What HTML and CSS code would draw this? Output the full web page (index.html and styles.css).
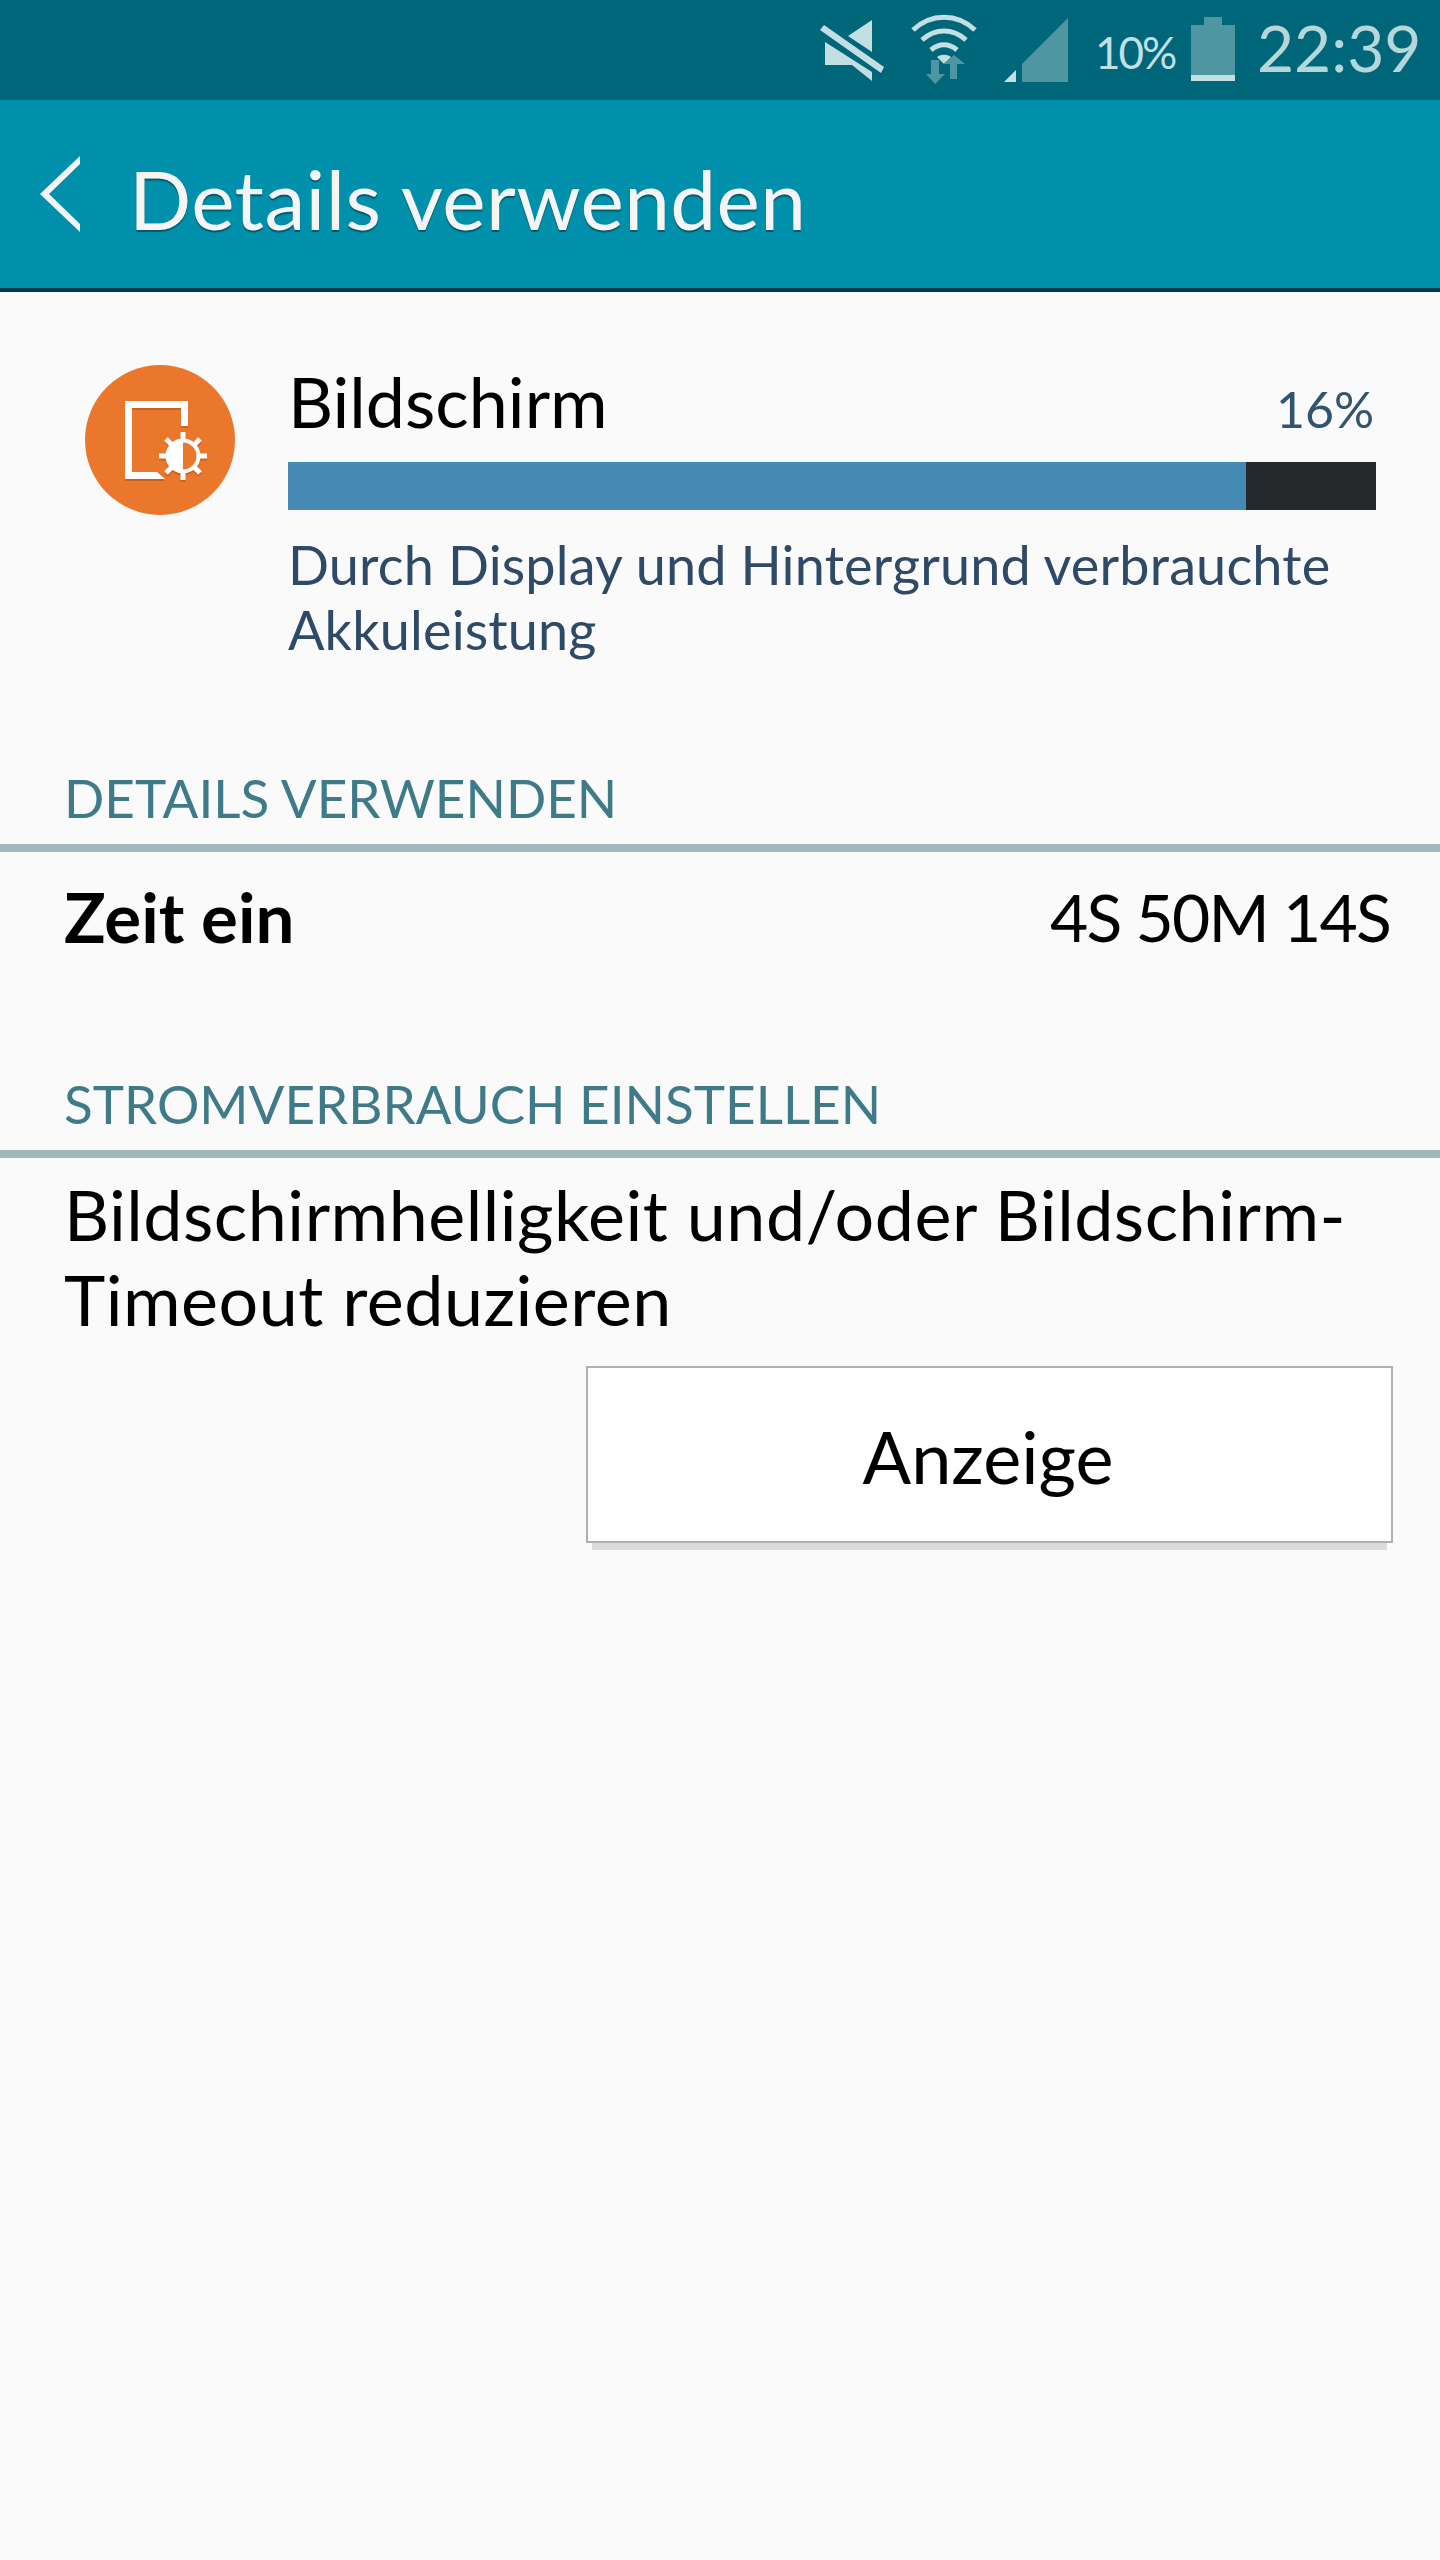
FILE: index.html
```html
<!DOCTYPE html>
<html>
<head>
  <meta charset="UTF-8">
  <title>Details verwenden</title>
  <link rel="stylesheet" href="styles.css">
</head>
<body>

  <div class="status-bar">
    <svg class="ic-mute" width="64" height="62" viewBox="0 0 64 62">
      <path d="M52 0V32L28 16Z M5 22L52 52V61L32 45H5Z" fill="#c3dfe3"/>
      <path d="M0 10L4 5L64 47L61 53Z" fill="#c3dfe3"/>
    </svg>
    <svg class="ic-wifi" width="66" height="70" viewBox="0 0 66 70">
      <g fill="none" stroke="#c3dfe3" stroke-width="5">
        <path d="M2 16C20 -1 46 -1 64 16"/>
        <path d="M11 26C24 14 42 14 55 26"/>
        <path d="M20 36C28 29 38 29 46 36"/>
      </g>
      <path d="M26 43C30 40 36 40 40 43L33 50Z" fill="#c3dfe3"/>
      <path d="M20 46H28V60H34L24 70L15 60H20Z" fill="#4f96a3"/>
      <path d="M39 65H46V50H54L43 41L32 50H39Z" fill="#4f96a3"/>
    </svg>
    <svg class="ic-signal" width="64" height="64" viewBox="0 0 64 64">
      <path d="M18 64V46L64 0V64Z" fill="#4f96a3"/>
      <path d="M0 64L12 52V64Z" fill="#c3dfe3"/>
    </svg>
    <span class="status-pct">10%</span>
    <div class="battery">
      <div class="battery-cap"></div>
      <div class="battery-body"><div class="battery-level"></div></div>
    </div>
    <span class="status-time">22:39</span>
  </div>

  <div class="action-bar">
    <svg class="ic-back" width="40" height="76" viewBox="0 0 40 76">
      <path d="M40 0V8L9 38L40 68V76L0 38Z" fill="#f5f5f5"/>
    </svg>
    <span class="action-title">Details verwenden</span>
  </div>

  <div class="usage">
    <svg class="ic-screen" width="150" height="150" viewBox="0 0 150 150">
      <circle cx="75" cy="75" r="75" fill="#ea772c"/>
      <g class="ic-screen-glyph">
        <path d="M40 36H103V61H96V43H47V107H72L80 114H40Z" fill="#fff"/>
        <path d="M98 67V115 M74 91H122 M81 74L115 108 M115 74L81 108" stroke="#fff" stroke-width="5"/>
        <circle cx="98" cy="91" r="15.5" fill="#ea772c" stroke="#fff" stroke-width="4"/>
        <path d="M98 74A17 17 0 0 0 98 108Z" fill="#fff"/>
      </g>
    </svg>
    <div class="usage-info">
      <div class="usage-head">
        <span class="usage-name">Bildschirm</span>
        <span class="usage-pct">16%</span>
      </div>
      <div class="usage-bar"><div class="usage-fill"></div></div>
      <div class="usage-desc">Durch Display und Hintergrund verbrauchte Akkuleistung</div>
    </div>
  </div>

  <div class="section-title">DETAILS VERWENDEN</div>
  <div class="time-row">
    <span class="time-label">Zeit ein</span>
    <span class="time-value">4S 50M 14S</span>
  </div>

  <div class="section-title">STROMVERBRAUCH EINSTELLEN</div>
  <div class="hint">Bildschirmhelligkeit und/oder Bildschirm-Timeout reduzieren</div>
  <div class="btn-row">
    <button class="btn" type="button">Anzeige</button>
  </div>

</body>
</html>
```

FILE: styles.css
```css
* {
  margin: 0;
  padding: 0;
  box-sizing: border-box;
}

body {
  width: 1440px;
  min-height: 2560px;
  background: #fafafa;
  font-family: 'Lato', sans-serif;
  color: #000;
}

.status-bar {
  height: 100px;
  background: #00677a;
  display: flex;
  align-items: flex-start;
  padding-left: 820px;
}

.ic-mute {
  margin-top: 20px;
}

.ic-wifi {
  margin: 14px 0 0 27px;
}

.ic-signal {
  margin: 18px 0 0 27px;
}

.status-pct {
  margin: 26px 0 0 27px;
  width: 81px;
  font-size: 44px;
  line-height: 52px;
  letter-spacing: -2px;
  color: #c3dfe3;
  white-space: nowrap;
}

.battery {
  margin: 17px 0 0 15px;
  width: 44px;
}

.battery-cap {
  width: 18px;
  height: 8px;
  margin-left: 13px;
  background: #4f96a3;
}

.battery-body {
  height: 56px;
  background: #4f96a3;
  padding-top: 50px;
}

.battery-level {
  height: 6px;
  background: #c3dfe3;
}

.status-time {
  margin: 12px 0 0 22px;
  font-size: 64px;
  line-height: 72px;
  color: #b5d6da;
  white-space: nowrap;
}

.action-bar {
  height: 192px;
  background: #0090ab;
  border-bottom: 4px solid #003a4f;
  display: flex;
  align-items: center;
  padding-left: 40px;
}

.action-title {
  margin: 8px 0 0 49px;
  font-size: 82px;
  letter-spacing: 0.4px;
  color: #f5f5f5;
  text-shadow: 0 2px 1px #005a6b;
  white-space: nowrap;
}

.usage {
  height: 468px;
  display: flex;
  align-items: flex-start;
  padding: 73px 64px 0 85px;
}

.ic-screen-glyph {
  filter: drop-shadow(0 2px 0 #c9621f);
}

.usage-info {
  margin-left: 53px;
  flex: 1;
}

.usage-head {
  height: 97px;
  display: flex;
  justify-content: space-between;
  align-items: center;
  padding-right: 2px;
}

.usage-name {
  margin-bottom: 26px;
  font-size: 70px;
}

.usage-pct {
  margin-bottom: 10px;
  font-size: 50px;
  color: #2f5570;
}

.usage-bar {
  height: 48px;
  background: #27282c;
}

.usage-fill {
  width: 958px;
  height: 100%;
  background: #448ab4;
}

.usage-desc {
  margin-top: 22px;
  font-size: 54px;
  line-height: 65px;
  letter-spacing: 0.16px;
  color: #2f4a66;
}

.section-title {
  height: 92px;
  padding-left: 64px;
  border-bottom: 8px solid #9fb8bb;
  font-size: 53px;
  line-height: 76px;
  color: #3f7a88;
  white-space: nowrap;
}

.time-row {
  height: 214px;
  display: flex;
  justify-content: space-between;
  padding: 0 50px 0 64px;
  line-height: 130px;
}

.time-label {
  font-size: 69px;
  font-weight: 700;
}

.time-value {
  font-size: 66px;
  letter-spacing: -1.8px;
}

.hint {
  padding: 14px 40px 0 64px;
  font-size: 70px;
  line-height: 85px;
  letter-spacing: 0.5px;
}

.btn-row {
  display: flex;
  justify-content: flex-end;
  margin-top: 24px;
  padding-right: 47px;
}

.btn {
  width: 807px;
  height: 177px;
  padding: 3px 3px 0 0;
  background: #fff;
  border: 2px solid #b0b0b0;
  box-shadow: 0 13px 0 -6px #dcdcdc;
  font-family: 'Lato', sans-serif;
  font-size: 72px;
  color: #000;
}
```
